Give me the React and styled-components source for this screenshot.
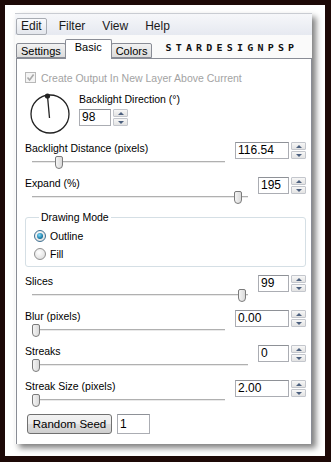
import React from "react"
import styled, { createGlobalStyle } from "styled-components"

const Global = createGlobalStyle`
  body {
    margin: 0;
    font-family: "Liberation Sans", Arial, sans-serif;
  }
`

// dark picture frame with a white mat
const Frame = styled.div`
  width: 331px;
  height: 462px;
  box-sizing: border-box;
  background: #fff;
  border-style: solid;
  border-color: #1d0907;
  border-width: 5px 6px 6px 5px;
  padding: 8px 0 0 10px;
`

const Window = styled.div`
  width: 297px;
  height: 431px;
  box-sizing: border-box;
  background: #fbfbfb;
  box-shadow: 4px 4px 6px rgba(0, 0, 0, 0.5);
  display: flex;
  flex-direction: column;
`

const MenuBar = styled.div`
  height: 21px;
  display: flex;
  align-items: flex-end;
  gap: 7px;
  padding-left: 1px;
  background: linear-gradient(#f6f7fa, #e6e9f0);
  border-top: 1px solid #c9ccd2;
`

const MenuItem = styled.div`
  height: 17px;
  box-sizing: border-box;
  padding: 0 4px;
  font-size: 12px;
  line-height: 15px;
  color: #1a1a1a;
  border: 1px solid ${(p) => (p.$active ? "#a8acb3" : "transparent")};
  border-radius: 2px;
  background: ${(p) => (p.$active ? "linear-gradient(#fafbfd, #e3e6ec)" : "none")};
`

const TabStrip = styled.div`
  height: 23px;
  display: flex;
  align-items: flex-end;
  padding-left: 1px;
  background: #fafafa;
`

const Tab = styled.div`
  height: ${(p) => (p.$selected ? "20px" : "15px")};
  box-sizing: border-box;
  padding: 0 ${(p) => (p.$selected ? "9px" : "4px")};
  margin-bottom: ${(p) => (p.$selected ? "-1px" : "0")};
  font-size: 11px;
  line-height: ${(p) => (p.$selected ? "15px" : "14px")};
  border: 1px solid #898c95;
  border-bottom: ${(p) => (p.$selected ? "none" : "1px solid #898c95")};
  border-radius: 2px 2px 0 0;
  background: ${(p) => (p.$selected ? "#fff" : "linear-gradient(#f2f2f2, #dcdcdc)")};
  margin-left: ${(p) => (p.$first ? "0" : "-1px")};
  position: relative;
  z-index: ${(p) => (p.$selected ? 2 : 1)};
`

const Logo = styled.div`
  margin: 0 0 4px 13px;
  font-family: "DejaVu Sans Mono", monospace;
  font-weight: bold;
  font-size: 10px;
  line-height: 10px;
  letter-spacing: 4.2px;
  color: #111;
  transform: scaleY(0.8);
`

const Panel = styled.div`
  margin-left: 1px;
  width: 296px;
  flex: 1;
  box-sizing: border-box;
  background: #fff;
  border: 1px solid #898c95;
  border-bottom: none;
  padding: 12px 5px 0 8px;
  display: flex;
  flex-direction: column;
`

const CheckRow = styled.div`
  display: flex;
  align-items: center;
  gap: 5px;
  height: 13px;
  font-size: 10.5px;
  color: #a3a3a3;
`

const CheckBox = styled.span`
  width: 11px;
  height: 11px;
  box-sizing: border-box;
  border: 1px solid #b8b8b8;
  background: #f4f4f4;
  display: inline-flex;
  align-items: center;
  justify-content: center;
`

const DialSection = styled.div`
  display: flex;
  margin-top: 9px;
  height: 49px;
`

const DialBox = styled.div`
  width: 54px;
  box-sizing: border-box;
  display: flex;
  justify-content: flex-start;
  padding-left: 4px;
`

const DirColumn = styled.div`
  display: flex;
  flex-direction: column;
  gap: 3px;
`

const Label = styled.div`
  font-size: 10.5px;
  line-height: 13px;
  color: #000;
  white-space: nowrap;
`

const SpinGroup = styled.div`
  display: flex;
  gap: 2px;
`

const NumInput = styled.div`
  width: ${(p) => p.$w}px;
  height: ${(p) => (p.$h ? p.$h : 17)}px;
  box-sizing: border-box;
  border: 1px solid #abadb3;
  border-top-color: #8e9197;
  background: #fff;
  font-size: 12px;
  line-height: ${(p) => (p.$h ? p.$h - 2 : 15)}px;
  padding-left: 2px;
  color: #000;
`

const SpinButtons = styled.div`
  width: 15px;
  height: 17px;
  display: flex;
  flex-direction: column;
  gap: 1px;
`

const SpinButton = styled.div`
  flex: 1;
  box-sizing: border-box;
  border: 1px solid #c3c6cc;
  border-radius: 1px;
  background: linear-gradient(#f7f7f7, #e3e3e3);
  display: flex;
  align-items: center;
  justify-content: center;
`

const Arrow = styled.span`
  width: 0;
  height: 0;
  border-left: 3px solid transparent;
  border-right: 3px solid transparent;
  ${(p) =>
    p.$up ? "border-bottom: 3px solid #4c607f;" : "border-top: 3px solid #4c607f;"}
`

const SliderBlock = styled.div`
  display: flex;
  height: 35px;
  margin-top: ${(p) => p.$mt || 0}px;
`

const SliderColumn = styled.div`
  flex: 1;
  display: flex;
  flex-direction: column;
`

const Track = styled.div`
  position: relative;
  height: 14px;
  margin: 1px 10px 0 7px;
  &::before {
    content: "";
    position: absolute;
    left: 0;
    right: 0;
    top: 5px;
    height: 1px;
    background: #b0b0b0;
    box-shadow: 0 1px 0 #e9e9e9;
  }
`

const Thumb = styled.div`
  position: absolute;
  top: 0;
  width: 8px;
  height: 13px;
  box-sizing: border-box;
  border: 1px solid #7b7b7b;
  border-radius: 2px 2px 4px 4px;
  background: linear-gradient(90deg, #f4f4f4, #dadada);
`

const Group = styled.fieldset`
  margin: -1px 0 0 0;
  padding: 3px 0 3px 8px;
  border: 1px solid #d5dfe5;
  border-radius: 3px;
  min-width: 0;
`

const Legend = styled.legend`
  font-size: 10.5px;
  line-height: 13px;
  padding: 0 2px;
  margin-left: 5px;
  color: #000;
`

const RadioRow = styled.label`
  display: flex;
  align-items: center;
  gap: 4px;
  height: 18px;
  font-size: 10.5px;
  color: #000;
`

const Radio = styled.span`
  width: 12px;
  height: 12px;
  box-sizing: border-box;
  border-radius: 50%;
  border: 1px solid ${(p) => (p.$on ? "#3c6f91" : "#8f8f8f")};
  background: radial-gradient(circle at 40% 35%, #ffffff, #d6d6d6);
  display: inline-flex;
  align-items: center;
  justify-content: center;
  &::after {
    content: "";
    display: ${(p) => (p.$on ? "block" : "none")};
    width: 6px;
    height: 6px;
    border-radius: 50%;
    background: radial-gradient(circle at 40% 35%, #7fdcff, #0e6e99 70%);
  }
`

const ButtonRow = styled.div`
  display: flex;
  gap: 5px;
  padding-left: 2px;
  margin-top: -1px;
`

const Button = styled.div`
  width: 85px;
  height: 20px;
  box-sizing: border-box;
  border: 1px solid #707070;
  border-radius: 3px;
  background: linear-gradient(#f2f2f2 0%, #ebebeb 50%, #dddddd 51%, #cfcfcf 100%);
  font-size: 11.5px;
  line-height: 18px;
  text-align: center;
  color: #000;
`

function Spinner() {
  return (
    <SpinButtons>
      <SpinButton>
        <Arrow $up />
      </SpinButton>
      <SpinButton>
        <Arrow />
      </SpinButton>
    </SpinButtons>
  )
}

function Slider({ label, value, wide, pos, mt }) {
  return (
    <SliderBlock $mt={mt}>
      <SliderColumn>
        <Label>{label}</Label>
        <Track>
          <Thumb style={{ left: `calc((100% - 8px) * ${pos})` }} />
        </Track>
      </SliderColumn>
      <SpinGroup>
        <NumInput $w={wide ? 54 : 31}>{value}</NumInput>
        <Spinner />
      </SpinGroup>
    </SliderBlock>
  )
}

function Dial() {
  return (
    <svg width="42" height="42" viewBox="0 0 42 42">
      <circle cx="21" cy="21" r="19" fill="none" stroke="#222" strokeWidth="1.3" />
      <line x1="18.5" y1="3" x2="20.5" y2="25" stroke="#222" strokeWidth="1.3" />
      <circle cx="18.5" cy="3" r="2.6" fill="#222" />
    </svg>
  )
}

export default function App() {
  return (
    <Frame>
      <Global />
      <Window>
        <MenuBar>
          <MenuItem $active>Edit</MenuItem>
          <MenuItem>Filter</MenuItem>
          <MenuItem>View</MenuItem>
          <MenuItem>Help</MenuItem>
        </MenuBar>
        <TabStrip>
          <Tab $first>Settings</Tab>
          <Tab $selected>Basic</Tab>
          <Tab>Colors</Tab>
          <Logo>STARDESIGNPSP</Logo>
        </TabStrip>
        <Panel>
          <CheckRow>
            <CheckBox>
              <svg width="9" height="9" viewBox="0 0 9 9">
                <path d="M1.5 4.5 L3.6 7 L7.6 1.5" fill="none" stroke="#a8a8a8" strokeWidth="1.6" />
              </svg>
            </CheckBox>
            Create Output In New Layer Above Current
          </CheckRow>
          <DialSection>
            <DialBox>
              <Dial />
            </DialBox>
            <DirColumn>
              <Label>Backlight Direction (°)</Label>
              <SpinGroup>
                <NumInput $w={32}>98</NumInput>
                <Spinner />
              </SpinGroup>
            </DirColumn>
          </DialSection>
          <Slider label="Backlight Distance (pixels)" value="116.54" wide pos={0.124} />
          <Slider label="Expand (%)" value="195" pos={0.97} />
          <Group>
            <Legend>Drawing Mode</Legend>
            <RadioRow>
              <Radio $on />
              Outline
            </RadioRow>
            <RadioRow>
              <Radio />
              Fill
            </RadioRow>
          </Group>
          <Slider label="Slices" value="99" pos={0.99} mt={8} />
          <Slider label="Blur (pixels)" value="0.00" wide pos={0} />
          <Slider label="Streaks" value="0" pos={0} />
          <Slider label="Streak Size (pixels)" value="2.00" wide pos={0} />
          <ButtonRow>
            <Button>Random Seed</Button>
            <NumInput $w={33} $h={20}>1</NumInput>
          </ButtonRow>
        </Panel>
      </Window>
    </Frame>
  )
}
